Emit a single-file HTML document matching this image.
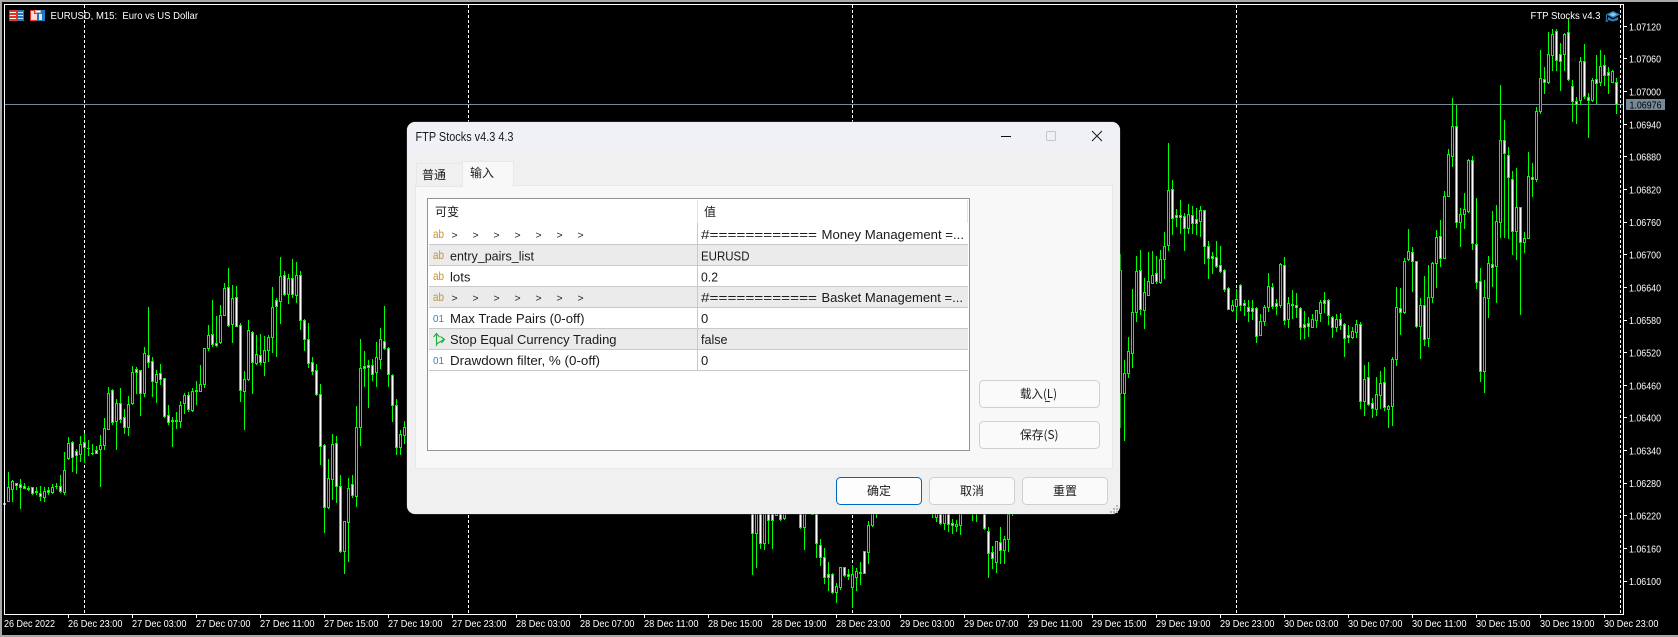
<!DOCTYPE html>
<html><head><meta charset="utf-8"><title>EURUSD, M15</title>
<style>
html,body{margin:0;padding:0;background:#000;width:1678px;height:637px;overflow:hidden}
svg{display:block;position:absolute;left:0;top:0}
.c text{font-family:"Liberation Sans",sans-serif;font-size:10.5px;fill:#fff}
.d text{font-family:"Liberation Sans","Noto Sans CJK SC",sans-serif;font-size:13px;fill:#1a1a1a}
.d .z{font-family:"Noto Sans CJK SC","Liberation Sans",sans-serif;font-size:12px}
.d .ab{font-size:12px;fill:#c29434}
.d .n{font-size:10.5px;fill:#3f7fb5}
</style></head><body>
<svg width="1678" height="637" viewBox="0 0 1678 637" xmlns="http://www.w3.org/2000/svg">
<rect width="1678" height="637" fill="#000"/>
<g shape-rendering="crispEdges">
<rect x="0" y="0" width="1678" height="2" fill="#a9a9a9"/>
<rect x="0" y="0" width="2" height="637" fill="#a9a9a9"/>
<rect x="0" y="635" width="1678" height="2" fill="#a9a9a9"/>
<path d="M84.5 5V614M468.5 5V614M852.5 5V614M1236.5 5V614M1620.5 5V614" stroke="#fff" stroke-dasharray="3 2" fill="none"/>
<rect x="5" y="104" width="1618" height="1" fill="#778899"/>
<path id="g" fill="#00ff00" d=""/>
<path id="w" fill="#ffffff" d=""/>
<path id="k" fill="#000000" d=""/>
<path fill="#fff" d="M4 4h1620v1H4zM4 4h1v611H4zM1623 4h1v611h-1zM4 614h1620v1H4z"/>
<path fill="#fff" d="M1624 26h3v1h-3zM1624 58h3v1h-3zM1624 91h3v1h-3zM1624 124h3v1h-3zM1624 156h3v1h-3zM1624 189h3v1h-3zM1624 222h3v1h-3zM1624 254h3v1h-3zM1624 287h3v1h-3zM1624 320h3v1h-3zM1624 352h3v1h-3zM1624 385h3v1h-3zM1624 417h3v1h-3zM1624 450h3v1h-3zM1624 483h3v1h-3zM1624 515h3v1h-3zM1624 548h3v1h-3zM1624 581h3v1h-3z"/>
<path fill="#fff" d="M68 615h1v3h-1zM132 615h1v3h-1zM196 615h1v3h-1zM260 615h1v3h-1zM324 615h1v3h-1zM388 615h1v3h-1zM452 615h1v3h-1zM516 615h1v3h-1zM580 615h1v3h-1zM644 615h1v3h-1zM708 615h1v3h-1zM772 615h1v3h-1zM836 615h1v3h-1zM900 615h1v3h-1zM964 615h1v3h-1zM1028 615h1v3h-1zM1092 615h1v3h-1zM1156 615h1v3h-1zM1220 615h1v3h-1zM1284 615h1v3h-1zM1348 615h1v3h-1zM1412 615h1v3h-1zM1476 615h1v3h-1zM1540 615h1v3h-1zM1604 615h1v3h-1z"/>
<rect x="1626" y="99" width="39" height="11" fill="#778899"/>
</g>
<!-- chart legends -->
<g shape-rendering="crispEdges">
<rect x="9" y="10" width="8" height="11" fill="#e0362c"/><rect x="17" y="10" width="7" height="11" fill="#1b78c4"/>
<path fill="#fff" d="M10 12h6v1h-6zM10 15h6v1h-6zM10 18h6v1h-6z"/>
<path fill="#cfe4f5" d="M18 12h5v1h-5zM18 15h5v1h-5zM18 18h5v1h-5z"/>
<path fill="#e0362c" d="M30 10h5v3h3v8h-8z"/><path fill="#ffd9d5" d="M31 11h3v3h3v6h-6z"/>
<path fill="#1b78c4" d="M38 13h3v-3h4v11h-7z"/><path fill="#d6e9f7" d="M39 14h3v6h-3z"/>
<path fill="#b5b5b5" d="M35 10h6v3h-6z"/><path fill="#fff" d="M36 11h4v1h-4z"/>
</g>
<g>
<path fill="#2b7fc0" d="M1613 11l7 3.5-7 3.5-7-3.5z"/>
<path fill="#8cc4ea" d="M1613 12.5l4 2-4 2-4-2z"/>
<path fill="#2b7fc0" d="M1608 17l5 2.5 5-2.5v3l-5 1.5-5-1.5z"/>
<rect x="1606" y="15" width="1" height="5" fill="#2b7fc0"/><rect x="1605.5" y="19.5" width="2.5" height="2.5" fill="#1b5f99"/>
</g>
<g class="c">
<text x="50.5" y="19" textLength="147.5" lengthAdjust="spacingAndGlyphs" xml:space="preserve">EURUSD, M15:  Euro vs US Dollar</text>
<text x="1530.5" y="19" textLength="70" lengthAdjust="spacingAndGlyphs">FTP Stocks v4.3</text>
<text x="1629" y="30.5" textLength="32" lengthAdjust="spacingAndGlyphs">1.07120</text>
<text x="1629" y="62.5" textLength="32" lengthAdjust="spacingAndGlyphs">1.07060</text>
<text x="1629" y="95.5" textLength="32" lengthAdjust="spacingAndGlyphs">1.07000</text>
<text x="1629.5" y="108.5" textLength="32" lengthAdjust="spacingAndGlyphs" style="fill:#000">1.06976</text>
<text x="1629" y="128.5" textLength="32" lengthAdjust="spacingAndGlyphs">1.06940</text>
<text x="1629" y="160.5" textLength="32" lengthAdjust="spacingAndGlyphs">1.06880</text>
<text x="1629" y="193.5" textLength="32" lengthAdjust="spacingAndGlyphs">1.06820</text>
<text x="1629" y="226" textLength="32" lengthAdjust="spacingAndGlyphs">1.06760</text>
<text x="1629" y="258.5" textLength="32" lengthAdjust="spacingAndGlyphs">1.06700</text>
<text x="1629" y="291.5" textLength="32" lengthAdjust="spacingAndGlyphs">1.06640</text>
<text x="1629" y="324" textLength="32" lengthAdjust="spacingAndGlyphs">1.06580</text>
<text x="1629" y="356.5" textLength="32" lengthAdjust="spacingAndGlyphs">1.06520</text>
<text x="1629" y="389.5" textLength="32" lengthAdjust="spacingAndGlyphs">1.06460</text>
<text x="1629" y="421.5" textLength="32" lengthAdjust="spacingAndGlyphs">1.06400</text>
<text x="1629" y="454.5" textLength="32" lengthAdjust="spacingAndGlyphs">1.06340</text>
<text x="1629" y="487" textLength="32" lengthAdjust="spacingAndGlyphs">1.06280</text>
<text x="1629" y="519.5" textLength="32" lengthAdjust="spacingAndGlyphs">1.06220</text>
<text x="1629" y="552.5" textLength="32" lengthAdjust="spacingAndGlyphs">1.06160</text>
<text x="1629" y="585" textLength="32" lengthAdjust="spacingAndGlyphs">1.06100</text>
<text x="4" y="627" textLength="51" lengthAdjust="spacingAndGlyphs">26 Dec 2022</text>
<text x="68" y="627" textLength="54.5" lengthAdjust="spacingAndGlyphs">26 Dec 23:00</text>
<text x="132" y="627" textLength="54.5" lengthAdjust="spacingAndGlyphs">27 Dec 03:00</text>
<text x="196" y="627" textLength="54.5" lengthAdjust="spacingAndGlyphs">27 Dec 07:00</text>
<text x="260" y="627" textLength="54.5" lengthAdjust="spacingAndGlyphs">27 Dec 11:00</text>
<text x="324" y="627" textLength="54.5" lengthAdjust="spacingAndGlyphs">27 Dec 15:00</text>
<text x="388" y="627" textLength="54.5" lengthAdjust="spacingAndGlyphs">27 Dec 19:00</text>
<text x="452" y="627" textLength="54.5" lengthAdjust="spacingAndGlyphs">27 Dec 23:00</text>
<text x="516" y="627" textLength="54.5" lengthAdjust="spacingAndGlyphs">28 Dec 03:00</text>
<text x="580" y="627" textLength="54.5" lengthAdjust="spacingAndGlyphs">28 Dec 07:00</text>
<text x="644" y="627" textLength="54.5" lengthAdjust="spacingAndGlyphs">28 Dec 11:00</text>
<text x="708" y="627" textLength="54.5" lengthAdjust="spacingAndGlyphs">28 Dec 15:00</text>
<text x="772" y="627" textLength="54.5" lengthAdjust="spacingAndGlyphs">28 Dec 19:00</text>
<text x="836" y="627" textLength="54.5" lengthAdjust="spacingAndGlyphs">28 Dec 23:00</text>
<text x="900" y="627" textLength="54.5" lengthAdjust="spacingAndGlyphs">29 Dec 03:00</text>
<text x="964" y="627" textLength="54.5" lengthAdjust="spacingAndGlyphs">29 Dec 07:00</text>
<text x="1028" y="627" textLength="54.5" lengthAdjust="spacingAndGlyphs">29 Dec 11:00</text>
<text x="1092" y="627" textLength="54.5" lengthAdjust="spacingAndGlyphs">29 Dec 15:00</text>
<text x="1156" y="627" textLength="54.5" lengthAdjust="spacingAndGlyphs">29 Dec 19:00</text>
<text x="1220" y="627" textLength="54.5" lengthAdjust="spacingAndGlyphs">29 Dec 23:00</text>
<text x="1284" y="627" textLength="54.5" lengthAdjust="spacingAndGlyphs">30 Dec 03:00</text>
<text x="1348" y="627" textLength="54.5" lengthAdjust="spacingAndGlyphs">30 Dec 07:00</text>
<text x="1412" y="627" textLength="54.5" lengthAdjust="spacingAndGlyphs">30 Dec 11:00</text>
<text x="1476" y="627" textLength="54.5" lengthAdjust="spacingAndGlyphs">30 Dec 15:00</text>
<text x="1540" y="627" textLength="54.5" lengthAdjust="spacingAndGlyphs">30 Dec 19:00</text>
<text x="1604" y="627" textLength="54.5" lengthAdjust="spacingAndGlyphs">30 Dec 23:00</text>
</g>
<!-- dialog -->
<g class="d">
<rect x="406.5" y="121.5" width="714" height="393" rx="9" fill="#3a3a3a"/>
<rect x="407" y="122" width="713" height="392" rx="8" fill="#f0f0f0"/>
<path d="M407 152V130a8 8 0 0 1 8-8h697a8 8 0 0 1 8 8v22z" fill="#f0f1f6"/>
<g shape-rendering="crispEdges">
<rect x="415.5" y="185.5" width="697" height="283" fill="#f8f8f8" stroke="#e8e8e8"/>
<rect x="416.5" y="163.5" width="46" height="23" fill="#f0f0f0" stroke="#e8e8e8"/>
<rect x="462.5" y="161.5" width="51" height="25" fill="#f8f8f8" stroke="#e8e8e8"/>
<rect x="463" y="184" width="50" height="3" fill="#f8f8f8"/>
<rect x="427.5" y="198.5" width="542" height="252" fill="#fff" stroke="#92929b"/>
<rect x="429" y="245" width="539" height="20" fill="#ebebeb"/>
<rect x="429" y="287" width="539" height="20" fill="#ebebeb"/>
<rect x="429" y="329" width="539" height="20" fill="#ebebeb"/>
<path fill="#c9c9c9" d="M429 244h539v1H429zM429 265h539v1H429zM429 286h539v1H429zM429 307h539v1H429zM429 328h539v1H429zM429 349h539v1H429zM429 370h539v1H429zM697 223h1v148h-1z"/>
<path fill="#e4e4e4" d="M697 200h1v23h-1zM967 200h1v23h-1z"/>
</g>
<text x="415.5" y="141" textLength="98" lengthAdjust="spacingAndGlyphs" style="font-size:12.5px">FTP Stocks v4.3 4.3</text>
<path d="M1001 136.5h10" stroke="#111" stroke-width="1" shape-rendering="crispEdges"/>
<rect x="1046.5" y="131.5" width="9" height="9" rx="1" fill="none" stroke="#c4c4c4"/>
<path d="M1092 131l10 10M1102 131l-10 10" stroke="#222" stroke-width="1.1" fill="none"/>
<text class="z" x="422" y="179">普通</text>
<text class="z" x="470" y="177">输入</text>
<text class="z" x="435" y="216">可变</text>
<text class="z" x="704" y="216">值</text>

<text class="ab" x="433" y="238" textLength="11" lengthAdjust="spacingAndGlyphs">ab</text>
<text class="ab" x="433" y="259" textLength="11" lengthAdjust="spacingAndGlyphs">ab</text>
<text class="ab" x="433" y="280" textLength="11" lengthAdjust="spacingAndGlyphs">ab</text>
<text class="ab" x="433" y="301" textLength="11" lengthAdjust="spacingAndGlyphs">ab</text>
<text class="n" x="433" y="322" textLength="11" lengthAdjust="spacingAndGlyphs">01</text>
<text class="n" x="433" y="364" textLength="11" lengthAdjust="spacingAndGlyphs">01</text>
<path d="M436.5 346V334M433.5 337l3-3.500 3 3.500M436.500 344L444 339.500M440.500 336.500l4 3-3 3.500" fill="none" stroke="#1fae3c" stroke-width="1.100"/>

<text x="451.500 472.500 493.500 514.500 535.500 556.500 577.500" y="238.500" style="font-size:10.500px">&gt;&gt;&gt;&gt;&gt;&gt;&gt;</text>
<text x="451.500 472.500 493.500 514.500 535.500 556.500 577.500" y="301.500" style="font-size:10.500px">&gt;&gt;&gt;&gt;&gt;&gt;&gt;</text>
<text x="450" y="260.500" textLength="84" lengthAdjust="spacingAndGlyphs">entry_pairs_list</text>
<text x="450" y="281.500" textLength="20.500" lengthAdjust="spacingAndGlyphs">lots</text>
<text x="450" y="323" textLength="134.500" lengthAdjust="spacingAndGlyphs">Max Trade Pairs (0-off)</text>
<text x="450" y="344" textLength="166.500" lengthAdjust="spacingAndGlyphs">Stop Equal Currency Trading</text>
<text x="450" y="365" textLength="150" lengthAdjust="spacingAndGlyphs">Drawdown filter, % (0-off)</text>

<text x="701" y="239" textLength="116" lengthAdjust="spacingAndGlyphs">#============</text>
<text x="821.500" y="239" textLength="142.500" lengthAdjust="spacingAndGlyphs">Money Management =...</text>
<text x="701" y="260.500" textLength="48.500" lengthAdjust="spacingAndGlyphs">EURUSD</text>
<text x="701" y="281.500" textLength="17" lengthAdjust="spacingAndGlyphs">0.2</text>
<text x="701" y="302" textLength="116" lengthAdjust="spacingAndGlyphs">#============</text>
<text x="821.500" y="302" textLength="141.500" lengthAdjust="spacingAndGlyphs">Basket Management =...</text>
<text x="701" y="323">0</text>
<text x="701" y="344" textLength="26.500" lengthAdjust="spacingAndGlyphs">false</text>
<text x="701" y="365">0</text>

<rect x="979.500" y="380.500" width="120" height="27" rx="4" fill="#fafafa" stroke="#cfcfcf"/>
<rect x="979.500" y="421.500" width="120" height="27" rx="4" fill="#fafafa" stroke="#cfcfcf"/>
<rect x="836.500" y="477.500" width="85" height="27" rx="4" fill="#fdfdfd" stroke="#0067c0"/>
<rect x="929.500" y="477.500" width="85" height="27" rx="4" fill="#fafafa" stroke="#cfcfcf"/>
<rect x="1022.500" y="477.500" width="85" height="27" rx="4" fill="#fafafa" stroke="#cfcfcf"/>
<text class="z" x="1020" y="398" textLength="37" lengthAdjust="spacingAndGlyphs">载入(L)</text>
<rect x="1045" y="401" width="5" height="1" fill="#333"/>
<text class="z" x="1020" y="439" textLength="38.500" lengthAdjust="spacingAndGlyphs">保存(S)</text>
<text class="z" x="867" y="495">确定</text>
<text class="z" x="960" y="495">取消</text>
<text class="z" x="1053" y="495">重置</text>
<path fill="#b8b8b8" shape-rendering="crispEdges" d="M1116 505h2v2h-2zM1113 508h2v2h-2zM1116 508h2v2h-2zM1110 511h2v2h-2zM1113 511h2v2h-2zM1116 511h2v2h-2z"/>
</g>
</svg>
<script>
(function(){
var G="",W="",K="";
function R(x0,y0,s){
  var rows=s.trim().split(/\s+/),x=x0;
  rows.forEach(function(r){
    var a=r.split(",").map(Number);
    var Y=function(z){return Math.round(y0+z/3)};
    var h=Y(a[0]),t=Y(a[1]),b=Y(a[2]),l=Y(a[3]),w=a[4];
    if(l>=h)G+="M"+x+" "+h+"h1v"+(l-h+1)+"h-1z";
    if(b>=t){
      var H=b-t+1;
      G+="M"+(x-1)+" "+t+"h3v"+H+"h-3z";
      if(H>=3){var p="M"+x+" "+(t+1)+"h1v"+(H-2)+"h-1z";if(w)W+=p;else K+=p;}
    }
    x+=4;
  });
}
R(4,240,`780,790,791,806,0 697,742,782,782,0 720,722,748,782,0 730,730,735,747,1 717,733,740,803,1 730,739,743,745,1 738,744,748,750,1 740,742,760,762,1 740,754,757,762,1 738,760,767,780,1 740,752,770,782,0 740,751,755,762,1 732,742,756,760,0 730,737,739,745,1 705,737,754,757,1 636,691,756,762,0 591,610,654,657,0 603,606,652,692,1 627,633,645,698,1 588,613,641,662,0 578,606,620,665,1 600,624,625,645,1 612,638,640,642,1 618,630,638,640,1 586,616,626,738,0 534,565,614,626,0 441,460,566,568,0 447,451,546,552,1 477,490,544,626,0 444,490,536,546,1 507,532,562,578,1 468,493,562,584,0 378,397,488,492,0 380,388,397,458,1 391,391,458,524,1 322,340,458,467,0 202,344,367,380,1 351,364,424,468,1 390,403,425,485,0 373,400,418,432,1 414,415,529,530,1 495,526,545,552,1 530,541,544,617,1 516,541,544,564,1 484,496,544,560,0 459,466,490,518,0 455,466,506,514,1 445,454,510,512,0 423,451,453,491,1 376,433,452,452,0 325,325,433,442,0 255,286,324,330,0 180,281,313,318,1 228,310,315,318,1 195,226,307,309,0 130,145,224,226,0 84,142,255,258,1 136,175,253,306,0 138,172,257,258,1 250,256,451,484,1 393,418,452,567,0 240,271,418,420,0 274,277,367,459,1 285,343,368,372,0 282,344,365,372,1 288,329,365,405,0 285,292,331,362,0 141,202,292,335,0 173,181,197,348,1 51,109,182,249,0 93,106,161,164,1 102,114,161,188,0 57,115,163,170,1 67,106,164,187,0 94,106,241,267,1 238,241,296,330,1 250,298,368,382,1 350,367,392,402,1 371,391,463,465,1 432,463,619,672,1 612,616,802,875,1 657,715,801,804,0 582,613,716,778,0 588,610,738,785,1 706,739,934,935,1 844,844,934,1000,0 714,745,845,962,0 706,733,766,770,1 498,562,767,797,0 297,385,560,614,0 334,379,385,438,1 360,374,380,500,1 358,376,401,420,1 306,352,397,437,0 265,298,358,384,0 198,304,325,328,1 320,324,403,437,1 402,404,496,543,1 478,496,622,641,1 570,583,622,642,0 544,562,584,608,0`);
R(1120,80,`522,570,938,1040,0 840,880,938,1080,0 771,814,878,891,0 628,697,818,861,0 528,574,697,723,0 510,571,686,702,1 594,637,689,744,0 516,604,644,644,0 513,586,608,610,0 528,580,602,610,1 510,538,606,608,0 457,499,536,594,0 190,331,494,510,0 300,328,413,462,1 388,406,410,438,1 360,406,410,458,1 400,409,443,510,1 372,403,445,459,0 378,404,428,458,1 384,418,428,462,1 378,391,422,468,0 390,391,497,549,1 484,498,533,594,1 516,529,533,580,1 484,530,557,560,1 498,556,573,575,1 568,570,627,632,1 622,624,686,686,1 660,674,690,692,0 628,658,678,718,0 612,614,676,690,1 660,668,676,705,1 660,680,692,722,1 660,685,692,716,1 682,685,767,785,1 702,722,764,765,0 676,682,724,735,0 580,619,680,692,0 610,622,678,684,1 658,668,677,702,1 548,552,674,682,0 532,556,719,732,1 652,668,716,740,0 630,672,674,714,1 640,674,682,712,1 682,683,740,776,1 694,733,740,773,1 712,730,737,768,1 702,718,740,742,0 690,691,719,742,0 660,667,698,722,0 636,660,668,695,1 658,660,704,732,1 708,712,740,770,1 702,718,740,752,0 700,718,734,748,1 728,733,773,827,1 736,766,770,785,1 740,754,771,773,0 720,733,756,770,0 726,733,962,984,1 855,898,962,1006,0 846,892,972,975,1 955,970,983,1010,1 892,943,986,1005,0 874,910,944,985,0 862,907,980,990,1 975,977,986,1040,0 832,838,977,1035,0 622,682,838,854,0 625,685,697,762,1 534,544,697,698,0 448,512,538,541,0 500,515,544,632,1 542,544,737,740,1 655,676,737,833,0 588,674,776,795,1 556,652,773,797,0 546,549,651,665,0 450,470,550,622,0 420,469,533,558,1 334,347,533,533,0 208,223,347,348,0 54,139,227,258,0 74,139,425,442,1 385,401,425,497,0 340,388,401,445,0 238,240,392,395,0 228,241,490,506,1 355,491,605,624,1 565,604,872,902,1 600,652,872,936,0 529,550,653,711,0 393,551,562,618,1 376,424,559,665,0 15,179,425,472,0 120,179,220,472,1 202,224,292,475,1 274,296,454,522,1 265,380,452,537,0 380,380,487,702,1 456,473,487,516,0 217,287,473,473,0 250,290,296,348,1 80,92,296,302,0`);
R(1540,0,`150,235,332,338,0 202,236,245,278,1 97,163,246,248,0 88,103,165,209,0 88,92,180,210,1 130,163,182,270,1 100,103,163,210,0 58,97,238,240,1 240,259,304,362,1 290,302,311,368,1 172,184,301,312,0 132,184,289,295,1 278,292,301,412,1 235,241,301,302,0 164,238,248,310,1 150,199,245,255,0 165,196,226,255,1 200,216,226,280,1 210,214,245,247,0 235,247,313,338,1`);
R(752,500,`0,0,100,222,1 0,0,98,200,0 0,0,130,143,1 0,0,130,148,0 0,0,60,130,1 0,0,60,145,1 0,0,45,45,0 0,0,58,60,1 0,0,55,58,0 0,0,30,30,0 0,0,30,30,0 0,0,30,30,0 0,0,82,85,1 0,0,82,148,0 0,0,30,30,0 0,0,42,42,0 0,0,128,172,1 118,134,172,195,1 145,172,230,248,1 187,223,230,270,1 218,223,277,280,1 250,259,277,305,0 202,202,260,268,0 200,202,226,228,1 207,221,228,237,1 195,221,260,322,0 205,212,230,270,0 186,216,218,252,1 152,153,218,220,1 62,76,155,188,0 0,0,75,78,0 0,0,30,50,0`);
R(932,500,`0,0,30,52,0 0,0,50,62,0 0,0,68,72,1 0,0,68,88,0 0,0,72,92,1 58,70,75,98,1 60,72,78,92,0 0,0,75,102,0 0,0,30,30,0 0,0,30,30,0 0,0,30,60,0 0,0,30,62,0 0,0,30,30,0 0,0,85,88,1 82,92,160,230,1 138,157,175,205,1 132,124,187,216,0 80,127,150,188,1 108,116,150,190,0 42,42,116,152,0 0,0,30,44,0`);
document.getElementById("g").setAttribute("d",G);
document.getElementById("w").setAttribute("d",W);
document.getElementById("k").setAttribute("d",K);
})();
</script>
</body></html>
